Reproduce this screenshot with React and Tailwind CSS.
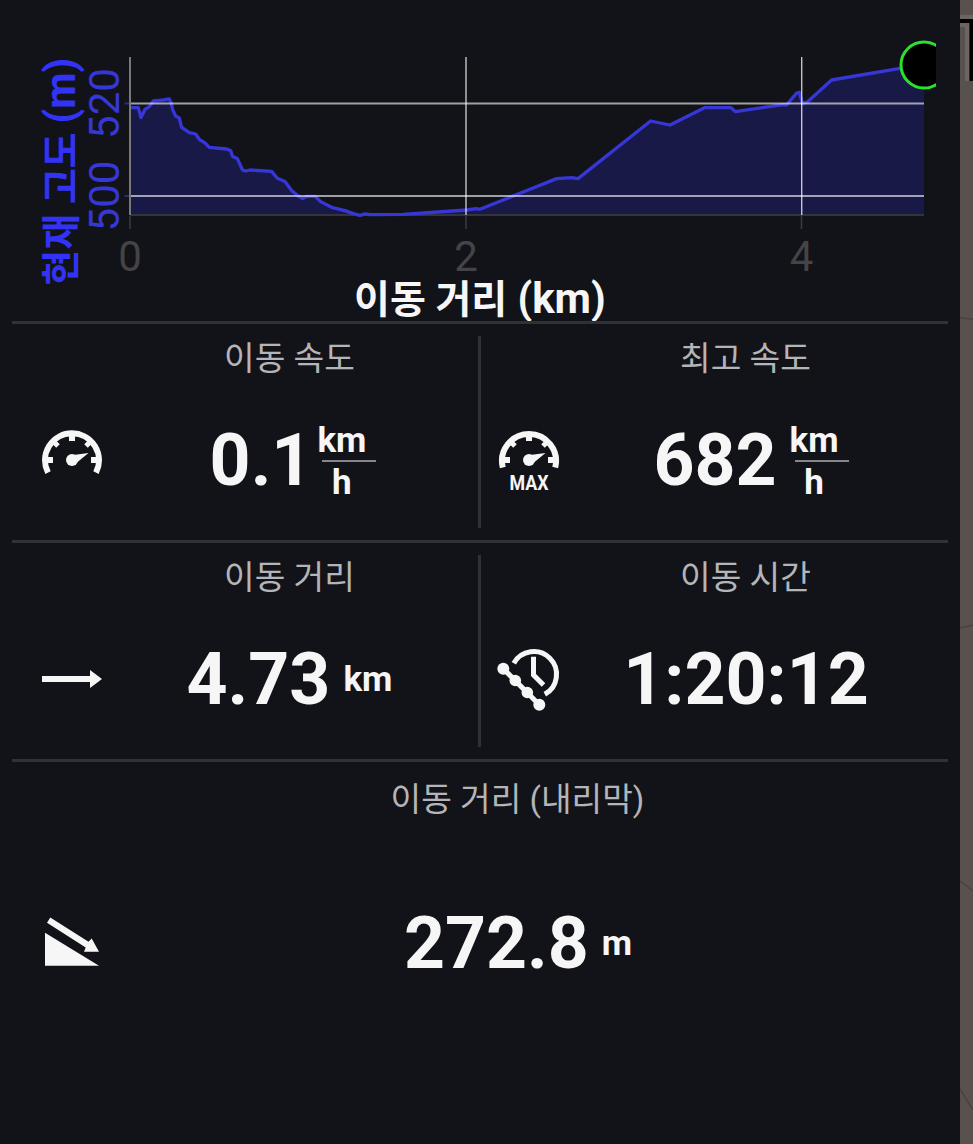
const elevation = [
  [130, 107.6], [138.3, 107.6], [141, 117.6], [145, 109.3], [149.3, 106.6], [153.3, 101], [163.3, 100], [169.3, 99],
  [171.3, 103.3], [172.6, 109.3], [175.6, 116], [179.3, 118], [181.6, 127.3], [189.3, 132.6], [195.6, 134],
  [199.3, 139.3], [205, 143], [209.3, 147.3], [226.6, 149], [230.6, 150.6], [232.6, 156.6], [237.3, 158.6],
  [242.6, 170], [245.6, 171], [250, 170], [271.6, 171.3], [277.3, 178.3], [285, 181.6], [291.6, 190.6], [298.3, 196],
  [302.6, 198.6], [306.6, 196.3], [315, 196.3], [320.6, 201.6], [331.6, 207.3], [345, 210.6], [353.3, 213.6],
  [360, 215.3], [365, 213.8], [370, 214.6], [403.3, 214.3], [466.6, 210], [476, 208.7], [480, 209.3], [520, 193.3],
  [556.6, 178.6], [571.6, 177.6], [578, 178.6], [650.6, 121], [670, 125], [705, 107.6], [731, 107.6], [735.3, 111.6],
  [783.3, 104.6], [786.6, 105], [796.6, 93], [799.3, 92.3], [802.3, 103.3], [807.3, 102], [831.6, 80], [900, 68.3],
  [924, 65],
]

const linePoints = elevation.map(p => p.join(',')).join(' ')

function ElevationChart() {
  return (
    <svg
      className="block w-[936px] h-[321px] overflow-visible font-[Roboto,'Noto_Sans_CJK_KR',sans-serif] text-[42px]"
      viewBox="0 0 936 321"
    >
      <clipPath id="chart-area">
        <rect width="936" height="321" />
      </clipPath>
      <polygon points={`130,215 ${linePoints} 924,215`} fill="#191947" />
      <path d="M130 215H924" stroke="#33343c" strokeWidth="2" />
      <polyline points={linePoints} fill="none" stroke="#3737d8" strokeWidth="3.300" strokeLinejoin="round" />

      {/* Grid and ticks */}
      <path d="M124.500 103.500H130M124.500 196H130" stroke="#2b2b78" strokeWidth="2" />
      <path d="M130 216V229M466 216V229M801.500 216V229" stroke="#3a3b40" strokeWidth="1.500" />
      <path d="M130 103.500H924M130 196H924" stroke="#fff" strokeOpacity="0.6" strokeWidth="1.800" />
      <path d="M130 57V215" stroke="#77777c" strokeWidth="2" />
      <path d="M466 57V215M801.700 57V215" stroke="#fff" strokeOpacity="0.75" strokeWidth="1.400" />

      <circle cx="924" cy="65" r="23" fill="#000" stroke="#2be02f" strokeWidth="3" clipPath="url(#chart-area)" />

      <g fill="#3737d8" textAnchor="middle">
        <text transform="translate(118.500 103.500) rotate(-90)">520</text>
        <text transform="translate(118.500 196) rotate(-90)">500</text>
      </g>
      <text transform="translate(75 285.500) rotate(-90)" fill="#3333f5" className="font-bold">
        <tspan className="text-[39px]">현재 고도</tspan>
        <tspan x="162">(m)</tspan>
      </text>

      <g fill="#444446" textAnchor="middle">
        <text x="130" y="271">0</text>
        <text x="466" y="271">2</text>
        <text x="801.5" y="271">4</text>
      </g>
      <text x="354" y="313" fill="#f6f6f6" className="font-bold">
        <tspan className="text-[39px]">이동 거리</tspan>
        <tspan x="517.500">(km)</tspan>
      </text>
    </svg>
  )
}

function Needle() {
  return (
    <>
      <circle cx="30" cy="30" r="6" />
      <path d="M27.500 25.500L46.500 23L32.500 34.500Z" />
    </>
  )
}

function SpeedIcon() {
  return (
    <svg className="size-[60px] fill-[#f6f6f6]" viewBox="0 0 60 60">
      <path d="M6 42.700A27 27 0 1 1 54 42.700" fill="none" stroke="#f6f6f6" strokeWidth="6" />
      <path d="M3 30H11M49 30H57M30 3V11" stroke="#f6f6f6" strokeWidth="6" />
      <path d="M12 12L16 16M48 12L44 16" stroke="#f6f6f6" strokeWidth="5" />
      <Needle />
    </svg>
  )
}

function MaxSpeedIcon() {
  return (
    <svg className="size-[60px] overflow-visible fill-[#f6f6f6]" viewBox="0 0 60 60">
      <path d="M3.800 37.500A27 27 0 1 1 56.200 37.500" fill="none" stroke="#f6f6f6" strokeWidth="6" />
      <path d="M3 30H11M49 30H57M30 3V11" stroke="#f6f6f6" strokeWidth="6" />
      <path d="M12 12L16 16M48 12L44 16" stroke="#f6f6f6" strokeWidth="5" />
      <Needle />
      <text x="10.500" y="60" className="font-[Roboto,sans-serif] text-[21px] font-bold" textLength="39" lengthAdjust="spacingAndGlyphs">MAX</text>
    </svg>
  )
}

function DistanceIcon() {
  return (
    <svg className="size-[60px] fill-[#f6f6f6]" viewBox="0 0 60 60">
      <path d="M0 27H48V21L60 30L48 39V33H0Z" />
    </svg>
  )
}

function TimeIcon() {
  return (
    <svg className="size-[60px] overflow-visible" viewBox="0 0 60 60" fill="none" stroke="#f6f6f6" strokeWidth="5">
      <path d="M14.800 14.300A22.800 22.800 0 1 1 45.800 45.300" />
      <path d="M34.500 7.700V26L44.500 36" />
      <path d="M4.300 19.700L40.300 55.700" />
      <g fill="#f6f6f6" stroke="none">
        <circle cx="4.300" cy="19.700" r="6" />
        <circle cx="16.300" cy="31.500" r="5.800" />
        <circle cx="28.300" cy="43.500" r="5.800" />
        <circle cx="40.300" cy="55.700" r="6" />
      </g>
    </svg>
  )
}

function DownhillIcon() {
  return (
    <svg className="size-[60px] fill-[#f6f6f6]" viewBox="0 0 60 60">
      <path d="M3 19.700L57 52.700H3Z" />
      <path d="M8.300 4.500L46.500 28.700L49.700 25.500L57 38.700H42L43.700 34.500L5 9.800Z" />
    </svg>
  )
}

function Label({ children }) {
  return <div className="h-[68px] pt-0.5 pr-px flex items-center justify-center text-[33.3px] text-[#b4b5b8]">{children}</div>
}

function Value({ children }) {
  return <span className="text-[71.5px] leading-[72px] font-bold">{children}</span>
}

function SpeedUnit() {
  return (
    <div className="w-[60px] flex flex-col text-[35px] leading-[40px] font-bold">
      <span className="h-10 pt-px w-[49px] text-center">km</span>
      <span className="w-[54px] h-0.5 ml-[5px] bg-[#85868a]"></span>
      <span className="h-10 pt-px w-[49px] text-center">h</span>
    </div>
  )
}

export default function App() {
  return (
    <div className="w-[973px] h-[1144px] flex overflow-hidden bg-[#121318] text-[#f6f6f6] font-[Roboto,'Noto_Sans_CJK_KR',sans-serif] whitespace-nowrap">
      <div className="w-[960px] flex flex-col">
        <ElevationChart />

        <div className="mx-3 border-t-3 border-[#303136] h-[219px] flex">
          <div className="w-[466px] flex pl-[30px]">
            <div className="mt-[106px]"><SpeedIcon /></div>
            <div className="flex-1">
              <Label>이동 속도</Label>
              <div className="h-[136px] pt-px flex items-center justify-center gap-[5px] pl-[7px]">
                <Value>0.1</Value>
                <SpeedUnit />
              </div>
            </div>
          </div>
          <div className="w-[3px] my-3 bg-[#303136]"></div>
          <div className="flex-1 flex pl-[18px] pr-[15px]">
            <div className="mt-[106px]"><MaxSpeedIcon /></div>
            <div className="flex-1">
              <Label>최고 속도</Label>
              <div className="h-[136px] pt-px flex items-center justify-center gap-[13px] pl-[11px]">
                <Value>682</Value>
                <SpeedUnit />
              </div>
            </div>
          </div>
        </div>

        <div className="mx-3 border-t-3 border-[#303136] h-[219px] flex">
          <div className="w-[466px] flex pl-[30px]">
            <div className="mt-[106px]"><DistanceIcon /></div>
            <div className="flex-1">
              <Label>이동 거리</Label>
              <div className="h-[136px] pt-0.5 pr-px flex items-center justify-center gap-[13px]">
                <Value>4.73</Value>
                <span className="text-[35px] font-bold">km</span>
              </div>
            </div>
          </div>
          <div className="w-[3px] my-3 bg-[#303136]"></div>
          <div className="flex-1 flex pl-[18px] pr-[15px]">
            <div className="mt-[106px]"><TimeIcon /></div>
            <div className="flex-1">
              <Label>이동 시간</Label>
              <div className="h-[136px] pt-0.5 flex items-center justify-center">
                <Value>1:20:12</Value>
              </div>
            </div>
          </div>
        </div>

        <div className="mx-3 border-t-3 border-[#303136] flex-1 flex pl-[30px] pr-[14px]">
          <div className="mt-[151px]"><DownhillIcon /></div>
          <div className="flex-1 pt-[3px]">
            <Label>이동 거리 (내리막)</Label>
            <div className="h-[220px] pt-0.5 flex items-center justify-center gap-[13px]">
              <Value>272.8</Value>
              <span className="text-[35px] font-bold">m</span>
            </div>
          </div>
        </div>
      </div>

      {/* Map edge behind the panel */}
      <svg className="w-[13px] h-[1144px] bg-[#59514d]" viewBox="0 0 13 1144">
        <path d="M0 17H13M0 25H7V81" fill="none" stroke="#696664" strokeWidth="4" />
        <path d="M0 21H11.500V81" fill="none" stroke="#000" strokeWidth="4" />
        <path d="M0 318L13 319M0 628L13 625M0 881L13 891M0 1089L13 1110" stroke="#4b433e" strokeWidth="1.500" />
      </svg>
    </div>
  )
}
